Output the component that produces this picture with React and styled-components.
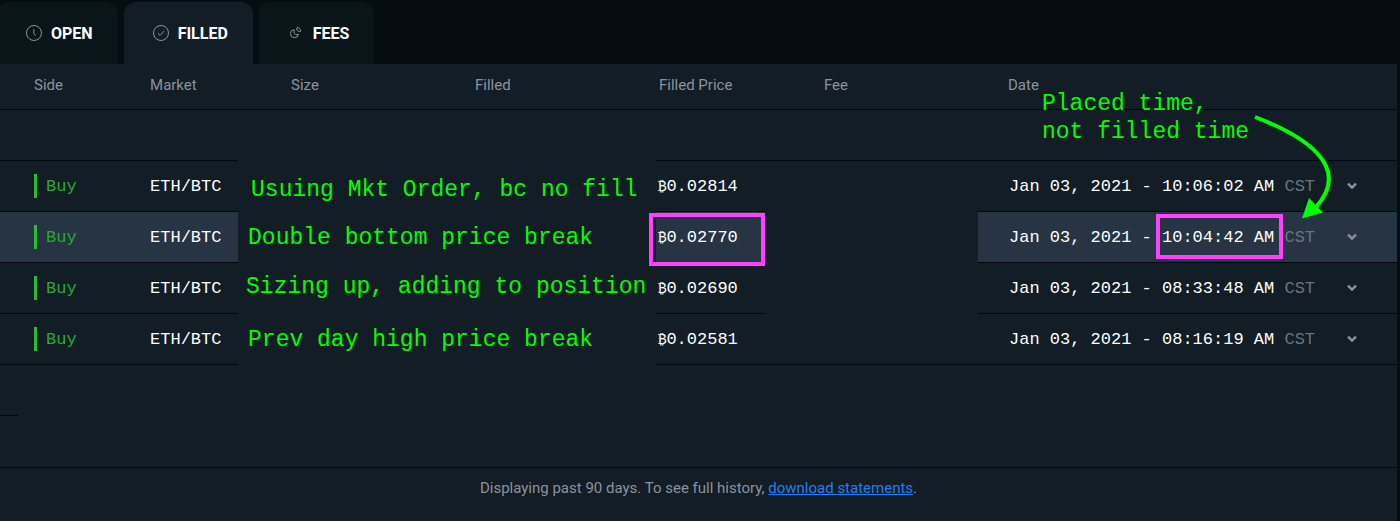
import React, { useState } from "react";
import styled, { createGlobalStyle } from "styled-components";

const orders = [
  {
    id: 1,
    price: "0.02814",
    time: "10:06:02 AM",
    note: { text: "Usuing Mkt Order, bc no fill", x: 13, y: 15 },
  },
  {
    id: 2,
    price: "0.02770",
    time: "10:04:42 AM",
    marked: true,
    note: { text: "Double bottom price break", x: 10, y: 12 },
  },
  {
    id: 3,
    price: "0.02690",
    time: "08:33:48 AM",
    note: { text: "Sizing up, adding to position", x: 8, y: 10 },
  },
  {
    id: 4,
    price: "0.02581",
    time: "08:16:19 AM",
    note: { text: "Prev day high price break", x: 10, y: 12 },
  },
];

const ClockIcon = () => (
  <Icon viewBox="0 0 16 16">
    <circle cx="8" cy="8" r="7.5" />
    <path d="M7.8 4.2v4l1.6 2.4" />
  </Icon>
);

const CheckIcon = () => (
  <Icon viewBox="0 0 16 16">
    <circle cx="8" cy="8" r="7.5" />
    <path d="M4.8 8.2l2.3 2.2 4.2-4.6" />
  </Icon>
);

const PieIcon = () => (
  <Icon viewBox="0 0 16 16">
    <path d="M6.2 4.7a4 4 0 1 0 4.2 4.6L7.6 9.700 6.200 8.200z" />
    <path d="M9 2.600c2.200 0 3.700 1.500 3.700 3.600l-1.600.6L8.800 5z" />
  </Icon>
);

const tabs = [
  { name: "OPEN", icon: ClockIcon },
  { name: "FILLED", icon: CheckIcon },
  { name: "FEES", icon: PieIcon },
];

const OrderRow = ({ price, time, note, marked, last }) => (
  <tr>
    <Cell $marked={marked}>
      <Side>Buy</Side>
    </Cell>
    <Cell $marked={marked}>ETH/BTC</Cell>
    <Cell colSpan={2} $plain>
      <Note $x={note.x} $y={note.y}>
        {note.text}
      </Note>
    </Cell>
    <Cell $marked={marked}>
      <Price>
        <Coin>₿</Coin>
        {price}
      </Price>
      {marked && <PriceFrame />}
    </Cell>
    <Cell $plain={!last} />
    <Cell $marked={marked}>
      <DateText>
        Jan 03, 2021 - <Time $framed={marked}>{time}</Time> <Zone>CST</Zone>
      </DateText>
    </Cell>
    <Cell $marked={marked}>
      <Expand type="button" aria-label="Show order details">
        <svg width="10" height="8" viewBox="0 0 10 8">
          <path
            d="M1 1.600l4 4 4-4"
            fill="none"
            stroke="currentColor"
            strokeWidth="2.4"
          />
        </svg>
      </Expand>
    </Cell>
  </tr>
);

export const App = () => {
  const [active, setActive] = useState("FILLED");

  return (
    <>
      <GlobalStyle />
      <Page>
        <Tabs>
          {tabs.map(({ name, icon: TabIcon }) => (
            <Tab
              key={name}
              type="button"
              $active={name === active}
              onClick={() => setActive(name)}
            >
              <TabIcon />
              {name}
            </Tab>
          ))}
        </Tabs>
        <Panel>
          <Table>
            <colgroup>
              <Col $share={10.74} />
              <Col $share={6.3} />
              <Col $share={16.96} />
              <Col $share={12.96} />
              <Col $share={7.8} />
              <Col $share={15.25} />
              <Col $share={25.84} />
              <Col $share={4.15} />
            </colgroup>
            <thead>
              <tr>
                <Head $indent={34}>Side</Head>
                <Head>Market</Head>
                <Head $indent={53}>Size</Head>
                <Head>Filled</Head>
                <Head $indent={3}>Filled Price</Head>
                <Head $indent={59}>Fee</Head>
                <Head $indent={30}>
                  Date
                  <Note $x={64} $y={26}>
                    Placed time,
                    <br />
                    not filled time
                  </Note>
                  <Arrow viewBox="978 64 400 170">
                    <path
                      d="M1255 117C1300 134 1354 165 1316 207"
                      fill="none"
                      stroke="#00ff00"
                      strokeWidth="4"
                    />
                    <path d="M1302 218.500l7-20.500 14 14.500z" fill="#00ff00" />
                  </Arrow>
                </Head>
                <Head />
              </tr>
            </thead>
            <tbody>
              <tr>
                <Cell colSpan={2} />
                <Cell colSpan={2} $plain />
                <Cell colSpan={4} />
              </tr>
              {orders.map((order, i) => (
                <OrderRow
                  key={order.id}
                  {...order}
                  last={i === orders.length - 1}
                />
              ))}
              <tr>
                <StubCell colSpan={8}>
                  <Stub />
                </StubCell>
              </tr>
            </tbody>
          </Table>
          <Footer>
            Displaying past 90 days. To see full history,{" "}
            <Link href="#statements">download statements</Link>.
          </Footer>
        </Panel>
      </Page>
    </>
  );
};

export default App;

const GlobalStyle = createGlobalStyle`
  * {
    box-sizing: border-box;
  }
  body {
    margin: 0;
    background: #050c12;
    color: #ffffff;
    font-family: Roboto, "Liberation Sans", sans-serif;
  }
`;
const Page = styled.div`
  display: flex;
  flex-direction: column;
  min-height: 100vh;
  overflow: hidden;
`;
const Tabs = styled.div`
  display: flex;
  gap: 6px;
  padding-top: 2px;
  margin-left: -3px;
`;
const Tab = styled.button`
  display: flex;
  align-items: center;
  gap: 9px;
  height: 62px;
  padding: 0 25px 0 29px;
  border: 0;
  border-radius: 12px 12px 0 0;
  background: ${(props) => (props.$active ? "#131d26" : "#0a151a")};
  color: #ffffff;
  font-family: inherit;
  font-size: 16px;
  font-weight: 700;
  cursor: pointer;
`;
const Icon = styled.svg`
  width: 16px;
  height: 16px;
  fill: none;
  stroke: #8a939f;
  stroke-width: 1;
`;
const Panel = styled.div`
  flex: 1;
  margin-right: 3px;
  background: #131d26;
`;
const Table = styled.table`
  width: 100%;
  table-layout: fixed;
  border-collapse: separate;
  border-spacing: 0;
`;
const Col = styled.col`
  width: ${(props) => props.$share}%;
`;
const Head = styled.th`
  position: relative;
  height: 46px;
  padding: 0 0 4px ${(props) => props.$indent || 0}px;
  border-bottom: 1px solid #02090e;
  color: #8a939f;
  font-size: 15px;
  font-weight: 400;
  text-align: left;
  white-space: nowrap;
`;
const Cell = styled.td`
  position: relative;
  height: 51px;
  padding: 0;
  border-bottom: 1px solid
    ${(props) => (props.$plain ? "transparent" : "#02090e")};
  background: ${(props) => (props.$marked ? "#273443" : "transparent")};
  font-family: "Liberation Mono", monospace;
  font-size: 17px;
  white-space: nowrap;
`;
const Side = styled.div`
  height: 24px;
  margin-left: 34px;
  padding-left: 9px;
  border-left: 3px solid #2dbb35;
  color: #2ca639;
  line-height: 26px;
`;
const Price = styled.div`
  padding-left: 2px;
`;
const Coin = styled.span`
  font-size: 14px;
`;
const PriceFrame = styled.div`
  position: absolute;
  inset: 1px 0 -4px -7px;
  border: 4px solid #ff40ff;
`;
const DateText = styled.div`
  padding-left: 31px;
`;
const Time = styled.span`
  position: relative;
  display: inline-block;
  &::after {
    content: "";
    display: ${(props) => (props.$framed ? "block" : "none")};
    position: absolute;
    inset: -14px -9px -12px -6px;
    border: 4px solid #ff40ff;
  }
`;
const Zone = styled.span`
  color: #6b747d;
`;
const Expand = styled.button`
  display: flex;
  margin-left: 8px;
  padding: 0;
  border: 0;
  background: none;
  color: #8a939f;
  cursor: pointer;
`;
const Note = styled.div`
  position: absolute;
  z-index: 1;
  left: ${(props) => props.$x}px;
  top: ${(props) => props.$y}px;
  color: #00ff00;
  font-family: "Liberation Mono", monospace;
  font-size: 23px;
  line-height: 28px;
  white-space: nowrap;
`;
const Arrow = styled.svg`
  position: absolute;
  z-index: 1;
  left: 0;
  top: 0;
  width: 400px;
  height: 170px;
  pointer-events: none;
`;
const StubCell = styled.td`
  height: 51px;
  padding: 0;
  vertical-align: bottom;
`;
const Stub = styled.div`
  width: 18px;
  border-bottom: 1px solid #02090e;
`;
const Footer = styled.div`
  margin-top: 51px;
  padding: 11px 0;
  border-top: 1px solid #02090e;
  color: #8a939f;
  font-size: 15px;
  line-height: 18px;
  text-align: center;
`;
const Link = styled.a`
  color: #1f80f5;
`;
